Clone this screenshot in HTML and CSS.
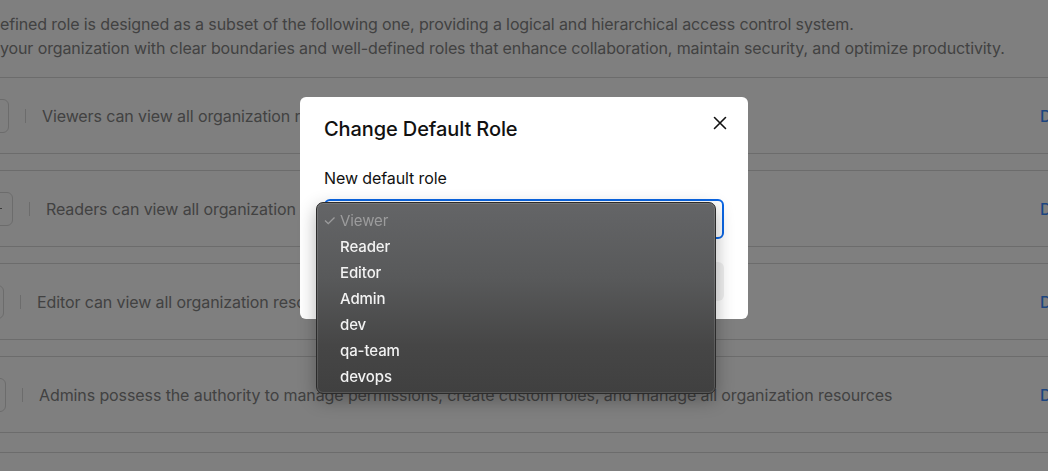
FILE: index.html
```html
<!DOCTYPE html>
<html lang="en">
<head>
<meta charset="utf-8">
<title>Roles</title>
<link rel="stylesheet" href="styles.css">
</head>
<body>
<div class="page">
  <div class="intro">
    <p class="intro-line">efined role is designed as a subset of the following one, providing a logical and hierarchical access control system.</p>
    <p class="intro-line">your organization with clear boundaries and well-defined roles that enhance collaboration, maintain security, and optimize productivity.</p>
  </div>
  <ul class="roles">
    <li class="role">
      <span class="tag tag-viewer"></span>
      <span class="sep"></span>
      <span class="desc">Viewers can view all organization resources</span>
      <a class="action">Default</a>
    </li>
    <li class="role">
      <span class="tag tag-reader"><span class="tag-mark"></span></span>
      <span class="sep"></span>
      <span class="desc">Readers can view all organization resources and read secrets</span>
      <a class="action">Default</a>
    </li>
    <li class="role">
      <span class="tag tag-editor"></span>
      <span class="sep"></span>
      <span class="desc">Editor can view all organization resources and edit them</span>
      <a class="action">Default</a>
    </li>
    <li class="role">
      <span class="tag tag-admin"></span>
      <span class="sep"></span>
      <span class="desc">Admins possess the authority to manage permissions, create custom roles, and manage all organization resources</span>
      <a class="action">Default</a>
    </li>
    <li class="role role-last"></li>
  </ul>
</div>

<div class="overlay"></div>

<div class="modal">
  <div class="modal-head">
    <h2 class="modal-title">Change Default Role</h2>
    <button class="close" aria-label="Close">
      <svg width="14" height="14" viewBox="0 0 14 14"><path d="M1.5 1.5 L12.5 12.5 M12.5 1.5 L1.5 12.5" stroke="#111" stroke-width="1.6" stroke-linecap="round" fill="none"/></svg>
    </button>
  </div>
  <label class="field-label">New default role</label>
  <div class="select">Viewer</div>
  <div class="modal-actions">
    <button class="btn btn-cancel">Cancel</button>
    <button class="btn btn-save">Save</button>
  </div>
</div>

<ul class="menu">
  <li class="menu-item is-selected"><span class="check">✓</span>Viewer</li>
  <li class="menu-item">Reader</li>
  <li class="menu-item">Editor</li>
  <li class="menu-item">Admin</li>
  <li class="menu-item">dev</li>
  <li class="menu-item">qa-team</li>
  <li class="menu-item">devops</li>
</ul>
</body>
</html>
```

FILE: styles.css
```css
* { box-sizing: border-box; }
html, body { margin: 0; padding: 0; }
body {
  width: 1048px;
  height: 471px;
  overflow: hidden;
  background: #ffffff;
  font-family: "Inter", "Liberation Sans", sans-serif;
  color: #848484;
}
.page { position: relative; }
.intro { padding-top: 12px; }
.intro-line {
  margin: 0;
  font-size: 16px;
  line-height: 24px;
  white-space: nowrap;
  letter-spacing: -0.12px;
}
.roles {
  list-style: none;
  margin: 17px 0 0 -60px;
  padding: 0;
  width: 1160px;
}
.role {
  display: flex;
  align-items: center;
  height: 77px;
  border-top: 1px solid #d8d8d8;
  border-bottom: 1px solid #d8d8d8;
  margin-bottom: 16px;
  font-size: 16px;
  letter-spacing: -0.1px;
}
.role-last { border-bottom: none; height: 20px; margin-top: 19px; }
.tag {
  display: flex;
  align-items: center;
  justify-content: flex-end;
  height: 34px;
  border: 1px solid #d8d8d8;
  border-radius: 6px;
  flex: none;
}
.tag-viewer { width: 69px; }
.tag-reader { width: 73px; justify-content: flex-start; padding-left: 57px; }
.tag-editor { width: 64px; }
.tag-admin { width: 66px; }
.tag-mark {
  width: 4px;
  height: 1px;
  background: #777;
}
.sep {
  width: 1px;
  height: 14px;
  background: #d8d8d8;
  margin: 0 16px;
  flex: none;
}
.desc { white-space: nowrap; flex: 1; }
.action {
  width: 60px;
  flex: none;
  color: #3b8cff;
  font-weight: 500;
}
.overlay {
  position: fixed;
  inset: 0;
  background: rgba(0, 0, 0, 0.5);
}
.modal {
  position: fixed;
  left: 300px;
  top: 97px;
  width: 448px;
  height: 222px;
  background: #fff;
  border-radius: 6px;
  padding: 18px 24px 0 24px;
  color: #111;
}
.modal-head {
  display: flex;
  justify-content: space-between;
  align-items: center;
}
.modal-title {
  margin: 0;
  font-size: 20px;
  line-height: 28px;
  font-weight: 500;
  letter-spacing: -0.1px;
}
.close {
  border: none;
  background: none;
  padding: 0;
  margin-right: -3px;
  width: 14px;
  height: 14px;
  display: flex;
  margin-top: -13px;
}
.field-label {
  display: block;
  margin-top: 25px;
  font-size: 16px;
  line-height: 20px;
  letter-spacing: -0.1px;
}
.select {
  margin-top: 11px;
  height: 40px;
  border: 2px solid #0b66e4;
  border-radius: 6px;
  padding: 0 12px;
  display: flex;
  align-items: center;
  font-size: 16px;
}
.modal-actions {
  display: flex;
  justify-content: flex-end;
  gap: 8px;
  margin-top: 23px;
}
.btn {
  height: 39px;
  border: none;
  border-radius: 6px;
  font-family: inherit;
  font-size: 15px;
  padding: 0 18px;
}
.btn-cancel { background: #fff; color: #111; }
.btn-save { background: #f0f0f0; color: #aaa; }
.menu {
  position: fixed;
  left: 316px;
  top: 202px;
  width: 400px;
  height: 192px;
  margin: 0;
  padding: 5px 0;
  list-style: none;
  border-radius: 7px;
  background: linear-gradient(180deg, #646567 0%, #58595a 40%, #464646 75%, #404040 100%);
  border: 1px solid #2b2b2b;
  box-shadow: inset 0 0 0 1px rgba(255,255,255,0.12), 0 6px 18px rgba(0,0,0,0.3);
  font-family: "Inter", "Liberation Sans", sans-serif;
  font-size: 15px;
  font-weight: 500;
  color: #f2f2f2;
}
.menu-item {
  height: 26px;
  line-height: 26px;
  padding-left: 23px;
  position: relative;
  letter-spacing: -0.1px;
}
.menu-item.is-selected { color: #9c9c9d; font-weight: 400; }
.check {
  position: absolute;
  left: 6px;
  top: 0;
  font-size: 15px;
}
```
